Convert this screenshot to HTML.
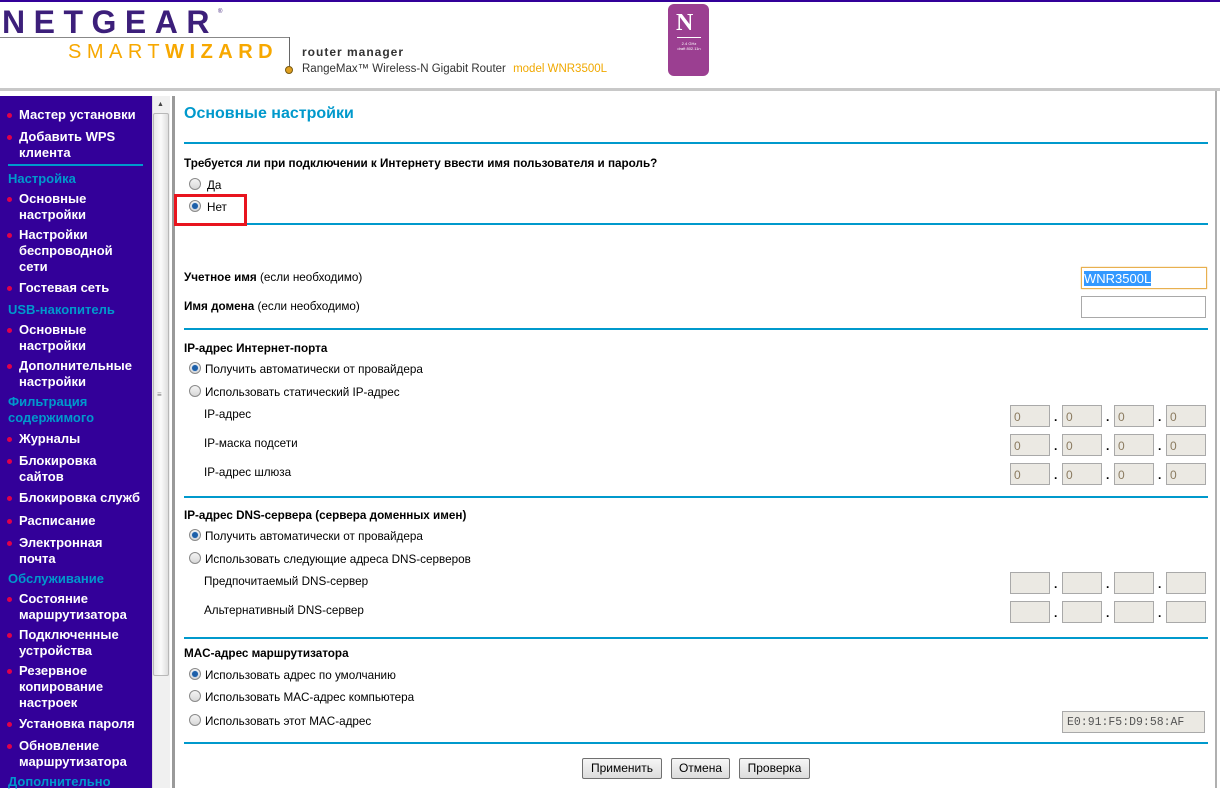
<!DOCTYPE html>
<html><head><meta charset="utf-8"><style>
*{margin:0;padding:0;box-sizing:border-box}
body{width:1220px;height:788px;overflow:hidden;background:#fff;font-family:"Liberation Sans",Arial,sans-serif;position:relative}
.a{position:absolute;white-space:nowrap}
.side{position:absolute;left:0;top:96px;width:152px;height:692px;background:#330099}
.si{position:absolute;left:19px;color:#fff;font-weight:bold;font-size:13px;line-height:16px}
.si.b::before{content:"";position:absolute;left:-12px;top:6px;width:5px;height:5px;border-radius:50%;background:#e0004a}
.sh{position:absolute;left:8px;color:#0099cc;font-weight:bold;font-size:13px;line-height:16px}
.t{font-size:11.7px;color:#000;line-height:14px}
.hl{position:absolute;left:184px;width:1024px;height:2px;background:#0099cc}
.r{position:absolute;width:12px;height:12px;border-radius:50%;border:1px solid #8a8a8a;background:linear-gradient(#f4f4f4,#d8d8d8)}
.r.on::after{content:"";position:absolute;left:2px;top:2px;width:6px;height:6px;border-radius:50%;background:#1d5fa8;box-shadow:0 0 1px #6af}
.ip{position:absolute;width:40px;height:22px;border:1px solid #a9a9a9;background:#ebe9e3;font-size:12px;color:#8b7b60;padding:4px 0 0 3px}
.dot{position:absolute;font-size:12px;font-weight:bold}
.btn{position:absolute;top:758px;height:21px;border:1px solid #707070;border-radius:2px;background:linear-gradient(#f6f6f6,#dcdcdc);font-size:12px;line-height:19px;text-align:center}
</style></head><body>
<div class="a" style="left:0;top:0;width:1220px;height:2px;background:#330099"></div>
<div class="a" style="left:2px;top:4px;font-size:32px;font-weight:bold;color:#3c1f7a;letter-spacing:8.5px;line-height:36px">NETGEAR</div>
<div class="a" style="left:218px;top:9px;font-size:6px;color:#3c1f7a">®</div>
<div class="a" style="left:0;top:37px;width:290px;height:1px;background:#888"></div>
<div class="a" style="left:289px;top:37px;width:1px;height:30px;background:#666"></div>
<div class="a" style="left:68px;top:41px;font-size:20px;color:#f7a800;letter-spacing:5.5px;line-height:22px">SMART<b>WIZARD</b></div>
<div class="a" style="left:285px;top:66px;width:8px;height:8px;border-radius:50%;background:#e0a020;border:1px solid #7a5a10"></div>
<div class="a" style="left:302px;top:45px;font-size:12px;font-weight:bold;color:#333;letter-spacing:1px">router manager</div>
<div class="a" style="left:302px;top:63px;font-size:11.5px;color:#333">RangeMax™ Wireless-N Gigabit Router <span style="color:#f0a800;margin-left:4px">model WNR3500L</span></div>
<div class="a" style="left:668px;top:4px;width:41px;height:72px;border-radius:6px;background:#9b3f91"></div>
<div class="a" style="left:676px;top:10px;font-size:24px;font-weight:bold;color:#fff;font-family:'Liberation Serif',serif">N</div>
<div class="a" style="left:677px;top:37px;width:24px;height:1px;background:#fff"></div>
<div class="a" style="left:672px;top:41px;font-size:4px;color:#fff;line-height:5px;text-align:center;width:34px">2.4 GHz<br>draft 802.11n</div>
<div class="a" style="left:0;top:88px;width:1220px;height:3px;background:#c8c8c8"></div>
<div class="side">
<div class="si b" style="top:11px">Мастер установки</div>
<div class="si b" style="top:33px">Добавить WPS<br>клиента</div>
<div class="a" style="left:8px;top:68px;width:135px;height:2px;background:#0099cc"></div>
<div class="sh" style="top:75px">Настройка</div>
<div class="si b" style="top:95px">Основные<br>настройки</div>
<div class="si b" style="top:131px">Настройки<br>беспроводной<br>сети</div>
<div class="si b" style="top:184px">Гостевая сеть</div>
<div class="sh" style="top:206px">USB-накопитель</div>
<div class="si b" style="top:226px">Основные<br>настройки</div>
<div class="si b" style="top:262px">Дополнительные<br>настройки</div>
<div class="sh" style="top:298px">Фильтрация<br>содержимого</div>
<div class="si b" style="top:335px">Журналы</div>
<div class="si b" style="top:357px">Блокировка<br>сайтов</div>
<div class="si b" style="top:394px">Блокировка служб</div>
<div class="si b" style="top:417px">Расписание</div>
<div class="si b" style="top:439px">Электронная<br>почта</div>
<div class="sh" style="top:475px">Обслуживание</div>
<div class="si b" style="top:495px">Состояние<br>маршрутизатора</div>
<div class="si b" style="top:531px">Подключенные<br>устройства</div>
<div class="si b" style="top:567px">Резервное<br>копирование<br>настроек</div>
<div class="si b" style="top:620px">Установка пароля</div>
<div class="si b" style="top:642px">Обновление<br>маршрутизатора</div>
<div class="sh" style="top:678px">Дополнительно</div>
</div>
<div class="a" style="left:152px;top:96px;width:18px;height:692px;background:#f0f0f0;border-left:1px solid #ddd"></div>
<div class="a" style="left:157px;top:101px;font-size:7px;color:#444">▲</div>
<div class="a" style="left:153px;top:113px;width:16px;height:563px;background:linear-gradient(90deg,#e8e8e8,#fafafa,#dedede);border:1px solid #b8b8b8;border-radius:2px"></div>
<div class="a" style="left:157px;top:390px;font-size:8px;color:#777">≡</div>
<div class="a" style="left:172px;top:96px;width:3px;height:692px;background:#9a9a9a"></div>
<div class="a" style="left:1215px;top:91px;width:2px;height:697px;background:#b0b0b0"></div>

<div class="a" style="left:184px;top:105px;font-size:16px;font-weight:bold;color:#0099cc">Основные настройки</div>
<div class="hl" style="top:142px"></div>
<div class="a t" style="left:184px;top:157px;font-weight:bold">Требуется ли при подключении к Интернету ввести имя пользователя и пароль?</div>
<div class="r" style="left:189px;top:178px"></div><div class="a t" style="left:207px;top:179px">Да</div>
<div class="a" style="left:174px;top:194px;width:73px;height:32px;border:3px solid #e8141e"></div>
<div class="r on" style="left:189px;top:200px"></div><div class="a t" style="left:207px;top:201px">Нет</div>
<div class="hl" style="top:223px;left:247px;width:961px"></div>

<div class="a t" style="left:184px;top:271px"><b>Учетное имя</b> (если необходимо)</div>
<div class="a" style="left:1081px;top:267px;width:126px;height:22px;border:1px solid #e8b050;box-shadow:0 0 1px #e8b050;font-size:13px;padding:3px 2px"><span style="background:#3399ff;color:#fff">WNR3500L</span></div>
<div class="a t" style="left:184px;top:300px"><b>Имя домена</b> (если необходимо)</div>
<div class="a" style="left:1081px;top:296px;width:125px;height:22px;border:1px solid #a9a9a9"></div>
<div class="hl" style="top:328px"></div>

<div class="a t" style="left:184px;top:342px;font-weight:bold">IP-адрес Интернет-порта</div>
<div class="r on" style="left:189px;top:362px"></div><div class="a t" style="left:205px;top:363px">Получить автоматически от провайдера</div>
<div class="r" style="left:189px;top:385px"></div><div class="a t" style="left:205px;top:386px">Использовать статический IP-адрес</div>
<div class="a t" style="left:204px;top:408px">IP-адрес</div>
<div class="a t" style="left:204px;top:437px">IP-маска подсети</div>
<div class="a t" style="left:204px;top:466px">IP-адрес шлюза</div>

<div class="hl" style="top:496px"></div>
<div class="a t" style="left:184px;top:509px;font-weight:bold">IP-адрес DNS-сервера (сервера доменных имен)</div>
<div class="r on" style="left:189px;top:529px"></div><div class="a t" style="left:205px;top:530px">Получить автоматически от провайдера</div>
<div class="r" style="left:189px;top:552px"></div><div class="a t" style="left:205px;top:553px">Использовать следующие адреса DNS-серверов</div>
<div class="a t" style="left:204px;top:575px">Предпочитаемый DNS-сервер</div>
<div class="a t" style="left:204px;top:604px">Альтернативный DNS-сервер</div>

<div class="hl" style="top:637px"></div>
<div class="a t" style="left:184px;top:647px;font-weight:bold">MAC-адрес маршрутизатора</div>
<div class="r on" style="left:189px;top:668px"></div><div class="a t" style="left:205px;top:669px">Использовать адрес по умолчанию</div>
<div class="r" style="left:189px;top:690px"></div><div class="a t" style="left:205px;top:691px">Использовать MAC-адрес компьютера</div>
<div class="r" style="left:189px;top:714px"></div><div class="a t" style="left:205px;top:715px">Использовать этот MAC-адрес</div>
<div class="a" style="left:1062px;top:711px;width:143px;height:22px;border:1px solid #a9a9a9;background:#ebe9e3;font-family:'Liberation Mono',monospace;font-size:11.5px;color:#555;padding:4px 0 0 4px">E0:91:F5:D9:58:AF</div>
<div class="hl" style="top:742px"></div>

<div class="btn" style="left:582px;width:80px">Применить</div>
<div class="btn" style="left:671px;width:59px">Отмена</div>
<div class="btn" style="left:739px;width:71px">Проверка</div>

<div id="ips"></div>
<script>
var h='';
[[405,1],[434,1],[463,1],[572,0],[601,0]].forEach(function(r){
 [1010,1062,1114,1166].forEach(function(x,i){
  h+='<div class="ip" style="left:'+x+'px;top:'+r[0]+'px">'+(r[1]?'0':'')+'</div>';
  if(i<3)h+='<div class="dot" style="left:'+(x+44)+'px;top:'+(r[0]+5)+'px">.</div>';
 });
});
document.getElementById('ips').innerHTML=h;
</script>
</body></html>
